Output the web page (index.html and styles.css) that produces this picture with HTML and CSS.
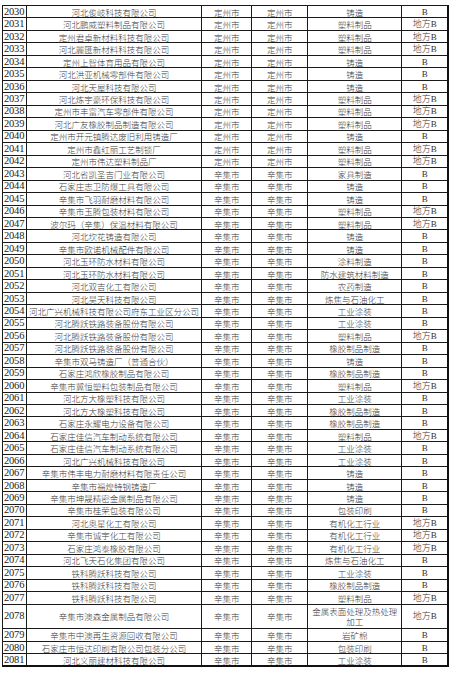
FILE: index.html
```html
<!DOCTYPE html>
<html lang="zh-CN">
<head>
<meta charset="utf-8">
<title>企业名单</title>
<link rel="stylesheet" href="styles.css">
</head>
<body>
<table class="list">
<colgroup>
<col class="c-no"><col class="c-name"><col class="c-city"><col class="c-county"><col class="c-ind"><col class="c-lvl">
</colgroup>
<tbody>
<tr><td class="no">2030</td><td>河北俊岐科技有限公司</td><td>定州市</td><td>定州市</td><td>铸造</td><td class="lv">B</td></tr>
<tr><td class="no">2031</td><td>河北鹏威塑料制品有限公司</td><td>定州市</td><td>定州市</td><td>塑料制品</td><td class="lv">地方B</td></tr>
<tr><td class="no">2032</td><td>定州君卓新材料科技有限公司</td><td>定州市</td><td>定州市</td><td>塑料制品</td><td class="lv">地方B</td></tr>
<tr><td class="no">2033</td><td>河北麗匯新材料科技有限公司</td><td>定州市</td><td>定州市</td><td>塑料制品</td><td class="lv">地方B</td></tr>
<tr><td class="no">2034</td><td>定州上智体育用品有限公司</td><td>定州市</td><td>定州市</td><td>铸造</td><td class="lv">B</td></tr>
<tr><td class="no">2035</td><td>河北洪亚机械零部件有限公司</td><td>定州市</td><td>定州市</td><td>铸造</td><td class="lv">B</td></tr>
<tr><td class="no">2036</td><td>河北天屋科技有限公司</td><td>定州市</td><td>定州市</td><td>铸造</td><td class="lv">B</td></tr>
<tr><td class="no">2037</td><td>河北炼宇豪环保科技有限公司</td><td>定州市</td><td>定州市</td><td>塑料制品</td><td class="lv">地方B</td></tr>
<tr><td class="no">2038</td><td>定州市丰富汽车零部件有限公司</td><td>定州市</td><td>定州市</td><td>塑料制品</td><td class="lv">地方B</td></tr>
<tr><td class="no">2039</td><td>河北广友橡胶制品制造有限公司</td><td>定州市</td><td>定州市</td><td>塑料制品</td><td class="lv">地方B</td></tr>
<tr><td class="no">2040</td><td>定州市开元镇腾达废旧利用铸造厂</td><td>定州市</td><td>定州市</td><td>铸造</td><td class="lv">B</td></tr>
<tr><td class="no">2041</td><td>定州市鑫红丽工艺制锁厂</td><td>定州市</td><td>定州市</td><td>塑料制品</td><td class="lv">地方B</td></tr>
<tr><td class="no">2042</td><td>定州市伟达塑料制品厂</td><td>定州市</td><td>定州市</td><td>塑料制品</td><td class="lv">地方B</td></tr>
<tr><td class="no">2043</td><td>河北省凯圣吉门业有限公司</td><td>辛集市</td><td>辛集市</td><td>家具制造</td><td class="lv">B</td></tr>
<tr><td class="no">2044</td><td>石家庄志卫防爆工具有限公司</td><td>辛集市</td><td>辛集市</td><td>铸造</td><td class="lv">B</td></tr>
<tr><td class="no">2045</td><td>辛集市飞羽耐磨材料有限公司</td><td>辛集市</td><td>辛集市</td><td>铸造</td><td class="lv">B</td></tr>
<tr><td class="no">2046</td><td>辛集市玉腾包装材料有限公司</td><td>辛集市</td><td>辛集市</td><td>塑料制品</td><td class="lv">地方B</td></tr>
<tr><td class="no">2047</td><td>波尔玛（辛集）保温材料有限公司</td><td>辛集市</td><td>辛集市</td><td>塑料制品</td><td class="lv">地方B</td></tr>
<tr><td class="no">2048</td><td>河北坎花铸造有限公司</td><td>辛集市</td><td>辛集市</td><td>铸造</td><td class="lv">B</td></tr>
<tr><td class="no">2049</td><td>辛集市欧诺机械配件有限公司</td><td>辛集市</td><td>辛集市</td><td>铸造</td><td class="lv">B</td></tr>
<tr><td class="no">2050</td><td>河北玉环防水材料有限公司</td><td>辛集市</td><td>辛集市</td><td>涂料制造</td><td class="lv">B</td></tr>
<tr><td class="no">2051</td><td>河北玉环防水材料有限公司</td><td>辛集市</td><td>辛集市</td><td>防水建筑材料制造</td><td class="lv">B</td></tr>
<tr><td class="no">2052</td><td>河北双吉化工有限公司</td><td>辛集市</td><td>辛集市</td><td>农药制造</td><td class="lv">B</td></tr>
<tr><td class="no">2053</td><td>河北昊天科技有限公司</td><td>辛集市</td><td>辛集市</td><td>炼焦与石油化工</td><td class="lv">B</td></tr>
<tr><td class="no">2054</td><td>河北广兴机械科技有限公司府东工业区分公司</td><td>辛集市</td><td>辛集市</td><td>工业涂装</td><td class="lv">B</td></tr>
<tr><td class="no">2055</td><td>河北腾跃铁路装备股份有限公司</td><td>辛集市</td><td>辛集市</td><td>工业涂装</td><td class="lv">B</td></tr>
<tr><td class="no">2056</td><td>河北腾跃铁路装备股份有限公司</td><td>辛集市</td><td>辛集市</td><td>塑料制品</td><td class="lv">地方B</td></tr>
<tr><td class="no">2057</td><td>河北腾跃铁路装备股份有限公司</td><td>辛集市</td><td>辛集市</td><td>橡胶制品制造</td><td class="lv">B</td></tr>
<tr><td class="no">2058</td><td>辛集市双马铸造厂（普通合伙）</td><td>辛集市</td><td>辛集市</td><td>铸造</td><td class="lv">B</td></tr>
<tr><td class="no">2059</td><td>石家庄鸿欣橡胶制品有限公司</td><td>辛集市</td><td>辛集市</td><td>橡胶制品制造</td><td class="lv">B</td></tr>
<tr><td class="no">2060</td><td>辛集市冀恒塑料包装制品有限公司</td><td>辛集市</td><td>辛集市</td><td>塑料制品</td><td class="lv">地方B</td></tr>
<tr><td class="no">2061</td><td>河北方大橡塑科技有限公司</td><td>辛集市</td><td>辛集市</td><td>工业涂装</td><td class="lv">B</td></tr>
<tr><td class="no">2062</td><td>河北方大橡塑科技有限公司</td><td>辛集市</td><td>辛集市</td><td>橡胶制品制造</td><td class="lv">B</td></tr>
<tr><td class="no">2063</td><td>石家庄永耀电力设备有限公司</td><td>辛集市</td><td>辛集市</td><td>橡胶制品制造</td><td class="lv">B</td></tr>
<tr><td class="no">2064</td><td>石家庄佳信汽车制动系统有限公司</td><td>辛集市</td><td>辛集市</td><td>塑料制品</td><td class="lv">地方B</td></tr>
<tr><td class="no">2065</td><td>石家庄佳信汽车制动系统有限公司</td><td>辛集市</td><td>辛集市</td><td>工业涂装</td><td class="lv">B</td></tr>
<tr><td class="no">2066</td><td>河北广兴机械科技有限公司</td><td>辛集市</td><td>辛集市</td><td>工业涂装</td><td class="lv">B</td></tr>
<tr><td class="no">2067</td><td>辛集市伟丰电力耐磨材料有限责任公司</td><td>辛集市</td><td>辛集市</td><td>铸造</td><td class="lv">B</td></tr>
<tr><td class="no">2068</td><td>辛集市福煌特钢铸造厂</td><td>辛集市</td><td>辛集市</td><td>铸造</td><td class="lv">B</td></tr>
<tr><td class="no">2069</td><td>辛集市坤晟精密金属制品有限公司</td><td>辛集市</td><td>辛集市</td><td>铸造</td><td class="lv">B</td></tr>
<tr><td class="no">2070</td><td>辛集市桂荣包装有限公司</td><td>辛集市</td><td>辛集市</td><td>包装印刷</td><td class="lv">B</td></tr>
<tr><td class="no">2071</td><td>河北奥星化工有限公司</td><td>辛集市</td><td>辛集市</td><td>有机化工行业</td><td class="lv">地方B</td></tr>
<tr><td class="no">2072</td><td>辛集市诚宇化工有限公司</td><td>辛集市</td><td>辛集市</td><td>有机化工行业</td><td class="lv">地方B</td></tr>
<tr><td class="no">2073</td><td>石家庄鸿泰橡胶有限公司</td><td>辛集市</td><td>辛集市</td><td>有机化工行业</td><td class="lv">地方B</td></tr>
<tr><td class="no">2074</td><td>河北飞天石化集团有限公司</td><td>辛集市</td><td>辛集市</td><td>炼焦与石油化工</td><td class="lv">B</td></tr>
<tr><td class="no">2075</td><td>铁科腾跃科技有限公司</td><td>辛集市</td><td>辛集市</td><td>工业涂装</td><td class="lv">B</td></tr>
<tr><td class="no">2076</td><td>铁科腾跃科技有限公司</td><td>辛集市</td><td>辛集市</td><td>橡胶制品制造</td><td class="lv">B</td></tr>
<tr><td class="no">2077</td><td>铁科腾跃科技有限公司</td><td>辛集市</td><td>辛集市</td><td>塑料制品</td><td class="lv">地方B</td></tr>
<tr class="tall"><td class="no">2078</td><td>辛集市澳森金属制品有限公司</td><td>辛集市</td><td>辛集市</td><td>金属表面处理及热处理加工</td><td class="lv">地方B</td></tr>
<tr><td class="no">2079</td><td>辛集市中澳再生资源回收有限公司</td><td>辛集市</td><td>辛集市</td><td>岩矿棉</td><td class="lv">B</td></tr>
<tr><td class="no">2080</td><td>石家庄市恒达印刷有限公司包装分公司</td><td>辛集市</td><td>辛集市</td><td>包装印刷</td><td class="lv">B</td></tr>
<tr><td class="no">2081</td><td>河北义丽建材科技有限公司</td><td>辛集市</td><td>辛集市</td><td>工业涂装</td><td class="lv">B</td></tr>
</tbody>
</table>
</body>
</html>
```

FILE: styles.css
```css
html, body {
  margin: 0;
  padding: 0;
  background: #ffffff;
}

body {
  padding: 5px 0 0 2px;
  font-family: "Noto Sans CJK SC", "Liberation Serif", serif;
  color: #3a3a3a;
}

.list {
  border-collapse: collapse;
  table-layout: fixed;
  width: 447px;
  border-right: 2px solid #111;
  border-bottom: 2px solid #111;
}

.c-no { width: 24px; }
.c-name { width: 175px; }
.c-city { width: 50px; }
.c-county { width: 56px; }
.c-ind { width: 94px; }
.c-lvl { width: 46px; }

.list tr {
  height: 12.47px;
}

.list tr.tall {
  height: 24.94px;
}

.list td {
  border: 1px solid #1a1a1a;
  padding: 0;
  font-size: 8.5px;
  line-height: 10px;
  text-align: center;
  vertical-align: middle;
  white-space: nowrap;
  overflow: hidden;
  font-weight: 300;
}

.list tr.tall td {
  white-space: normal;
}

.list td.no {
  text-align: left;
  font-family: "Liberation Serif", serif;
  font-size: 10.5px;
  font-weight: 400;
  color: #222;
  padding-left: 1px;
  letter-spacing: -0.2px;
}

.list td.lv {
  font-family: "Liberation Serif", "Noto Sans CJK SC", serif;
  font-size: 9px;
  font-weight: 300;
  color: #333;
}
```
